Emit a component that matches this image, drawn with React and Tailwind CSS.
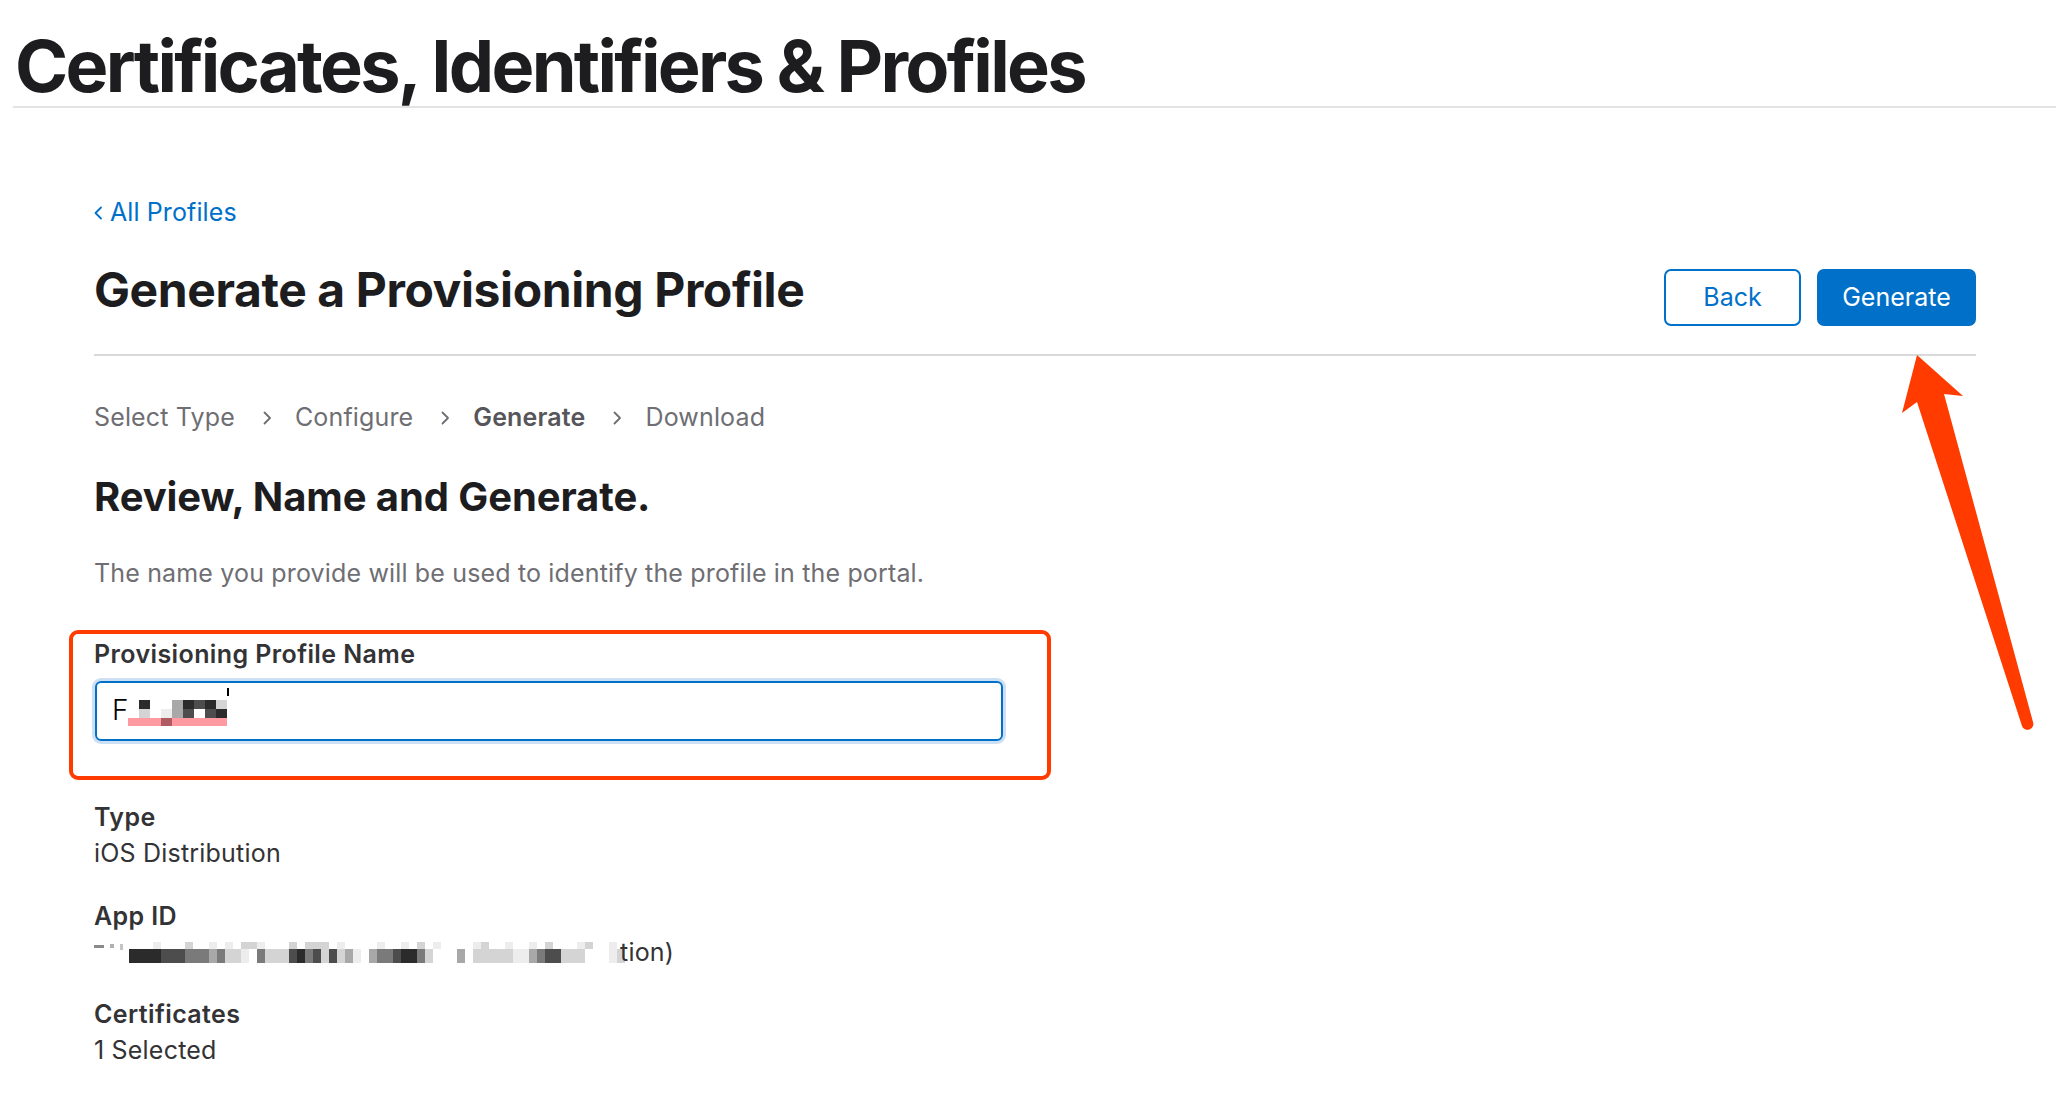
const SHADE = {
  0: "bg-white",
  1: "bg-[#ededed]",
  2: "bg-[#d4d4d4]",
  3: "bg-[#a8a8a8]",
  4: "bg-[#7a7a7a]",
  5: "bg-[#4d4d4d]",
  6: "bg-[#2b2b2b]",
};

const appTop = "000100020010102210002022201000010010201000012001001020001200100";
const appBot = "666655544434221042225645252310344566420003022222113455222000120";
const nameTop = "060036562";
const nameBot = "020135056";

function Pixels({ rows, cell = "w-[11px]", heights }) {
  return (
    <div className="flex flex-col">
      {rows.map((r, i) => (
        <div key={i} className="flex">
          {r.split("").map((c, j) => (
            <div key={j} className={`${cell} ${heights[i]} ${SHADE[c]}`} />
          ))}
        </div>
      ))}
    </div>
  );
}

function Chevron({ dir = "right", className = "" }) {
  return (
    <svg width="9" height="14" viewBox="0 0 9 14" className={className} fill="none" stroke="currentColor" strokeWidth="1.8" strokeLinecap="round" strokeLinejoin="round">
      {dir === "right" ? <path d="M1.5 1.5 L7 7 L1.5 12.5" /> : <path d="M7 1.5 L1.5 7 L7 12.5" />}
    </svg>
  );
}

function Field({ label, children, className = "" }) {
  return (
    <div className={className}>
      <div className="text-[25px] leading-[36px] font-semibold tracking-[0.4px] text-[#333336]">{label}</div>
      <div className="text-[25px] leading-[36px] tracking-[0.2px] text-[#333336]">{children}</div>
    </div>
  );
}

export default function App() {
  const steps = ["Select Type", "Configure", "Generate", "Download"];

  return (
    <div className="relative min-h-screen bg-white font-[Inter,'Liberation_Sans',sans-serif] text-[#1d1d1f]">
      <header className="pl-[15px] pt-[26px]">
        <h1 className="text-[72px] leading-[80px] font-bold tracking-[-2.7px]">
          Certificates, Identifiers &amp; Profiles
        </h1>
      </header>
      <div className="ml-[13px] h-[2px] bg-[#e3e3e3]" />

      <main className="pl-[94px] pr-[80px]">
        <a className="mt-[86px] flex items-center gap-[7px] text-[25px] leading-[36px] tracking-[0.1px] text-[#0070c9]" href="#">
          <Chevron dir="left" className="mt-[2px]" />
          All Profiles
        </a>

        <div className="mt-[32px] flex items-start justify-between">
          <h2 className="text-[48px] leading-[56px] font-bold tracking-[-0.4px]">Generate a Provisioning Profile</h2>
          <div className="mt-[7px] flex gap-[16px]">
            <button className="h-[57px] w-[137px] rounded-[7px] border-2 border-[#0070c9] text-[25px] text-[#0070c9]">
              Back
            </button>
            <button className="h-[57px] w-[159px] rounded-[7px] bg-[#0070c9] text-[25px] text-white">
              Generate
            </button>
          </div>
        </div>

        <div className="mt-[28px] h-[2px] bg-[#d9d9d9]" />

        <nav className="mt-[43px] flex items-center text-[25px] leading-[36px] tracking-[0.15px] text-[#6e6e73]">
          {steps.map((s, i) => (
            <div key={s} className="flex items-center">
              <span className={s === "Generate" ? "font-semibold text-[#56565a]" : ""}>{s}</span>
              {i < steps.length - 1 && <Chevron className="ml-[28px] mr-[23px] mt-[1px] text-[#6e6e73]" />}
            </div>
          ))}
        </nav>

        <h3 className="mt-[39px] text-[40px] leading-[46px] font-bold tracking-[-0.1px]">Review, Name and Generate.</h3>

        <p className="mt-[35px] text-[25px] leading-[36px] tracking-[0.16px] text-[#6e6e73]">
          The name you provide will be used to identify the profile in the portal.
        </p>

        <div className="ml-[-25px] mt-[39px] w-[982px] rounded-[9px] border-4 border-[#ff3b00] pl-[21px] pr-[40px] pt-[4px] pb-[35px]">
          <div className="text-[25px] leading-[32px] font-semibold tracking-[0.4px] text-[#333336]">Provisioning Profile Name</div>
          <div className="mt-[11px] ml-[1px] flex h-[60px] w-[908px] items-center rounded-[6px] border-2 border-[#0070c9] pl-[15px] shadow-[0_0_0_3px_#cde0f3]">
            <div className="relative flex items-start">
              <span className="text-[28px] leading-[28px] font-light text-black">F</span>
              <div className="mt-[4px] flex flex-col">
                <Pixels rows={[nameTop, nameBot]} heights={["h-[9px]", "h-[9px]"]} />
                <div className="flex h-[8px] w-[99px] bg-[#ff9aa2]">
                  <div className="ml-[33px] w-[11px] bg-[#b05a64]" />
                </div>
              </div>
              <div className="mt-[-8px] h-[8px] w-[2px] bg-black" />
            </div>
          </div>
        </div>

        <Field label="Type" className="mt-[19px]">iOS Distribution</Field>

        <Field label="App ID" className="mt-[27px]">
          <div className="flex h-[36px] items-center">
            <div className="flex h-[21px] w-[35px] items-start gap-[6px] pt-[2px]">
              <div className="mt-[1px] h-[3px] w-[10px] bg-[#8a8a8a]" />
              <div className="h-[4px] w-[4px] bg-[#b0b0b0]" />
              <div className="h-[6px] w-[3px] bg-[#c4c4c4]" />
            </div>
            <Pixels rows={[appTop, appBot]} cell="w-[8px]" heights={["h-[7px]", "h-[14px]"]} />
            <span className="ml-[-13px] text-[25px] text-[#333336]">tion)</span>
          </div>
        </Field>

        <Field label="Certificates" className="mt-[26px]">1 Selected</Field>
      </main>

      <svg className="pointer-events-none absolute left-0 top-0" width="2056" height="1100" viewBox="0 0 2056 1100">
        <path
          d="M1917,355 L1963,396 L1944,394 L2033,722 A5.5,5.5 0 0 1 2022,726 L1917,402 L1902,413 Z"
          fill="#ff3b00"
        />
      </svg>
    </div>
  );
}
